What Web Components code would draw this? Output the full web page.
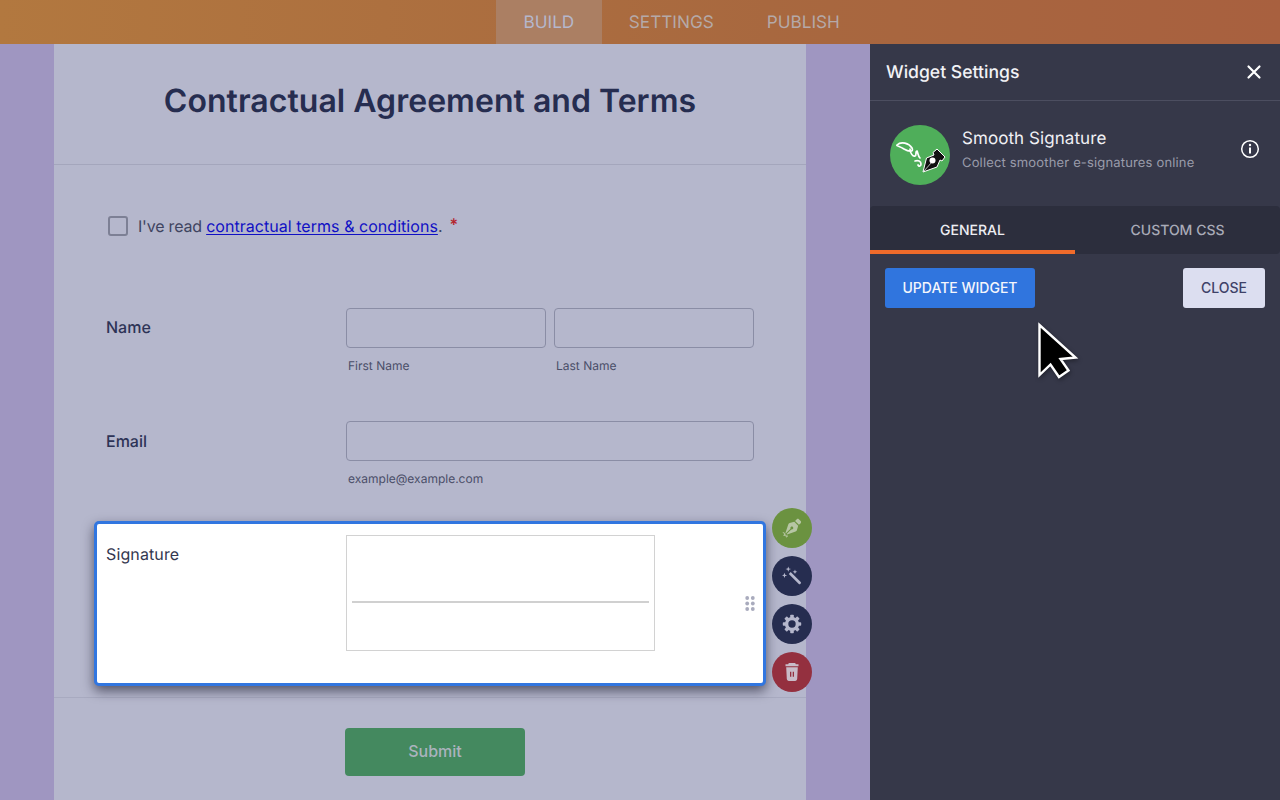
<!DOCTYPE html>
<html lang="en"><head><meta charset="utf-8"><title>Form builder</title>
<style>
html,body{margin:0;padding:0;height:100%;overflow:hidden;background:#9f96c1}
body{font-family:"Inter","Liberation Sans",sans-serif;text-rendering:geometricPrecision}
</style></head>
<body>
<app-shell>
  <top-bar slot="top"></top-bar>
  <form-canvas slot="main">
    <form-card>
      <h-title slot="header">Contractual Agreement and Terms</h-title>
      <terms-row></terms-row>
      <field-row label="Name" style="--top:72px;--h:113px;--lt:9px"><name-inputs></name-inputs></field-row>
      <field-row label="Email" style="--top:0;--h:88px;--lt:9.5px"><email-input></email-input></field-row>
      <selected-field label="Signature"></selected-field>
      <submit-row></submit-row>
    </form-card>
  </form-canvas>
  <settings-panel slot="side"></settings-panel>
</app-shell>
<mouse-cursor></mouse-cursor>
<script>
const def=(name,html)=>customElements.define(name,class extends HTMLElement{
  connectedCallback(){ if(this.shadowRoot) return; const r=this.attachShadow({mode:'open'}); r.innerHTML=typeof html==='function'?html(this):html; }
});
def('app-shell',`<style>
:host{display:grid;grid-template-columns:870px 410px;grid-template-rows:44px 756px;width:1280px;height:800px;overflow:hidden}
.t{grid-column:1/3}
</style><div class="t"><slot name="top"></slot></div><slot name="main"></slot><slot name="side"></slot>`);
def('top-bar',`<style>
:host{display:flex;padding-left:496px;height:44px;background:linear-gradient(90deg,#b2783f 0%,#a8683f 60%,#a8603f 100%);font:400 17.200px/45px Inter,sans-serif;color:#b5a9a8}
a{display:block;padding:0 26.500px;color:inherit;text-decoration:none}
a.on{background:#ab7f63;color:#b5b7cc;padding:0 28px 0 27.500px}
nav{display:flex}
</style><nav><a class="on">BUILD</a><a>SETTINGS</a><a>PUBLISH</a></nav>`);
def('form-canvas',`<style>:host{display:block;height:756px;background:#9f96c1;padding-left:54px;overflow:hidden}</style><slot></slot>`);
def('form-card',`<style>
:host{display:block;width:752px;height:756px;background:#b5b7cc;position:relative}
header{box-sizing:border-box;height:121px;padding-bottom:7px;border-bottom:1px solid #a4a6bc;display:flex;align-items:center;justify-content:center}
</style><header><slot name="header"></slot></header><slot></slot>`);
def('h-title',`<style>:host{display:block;font:600 32px/40px Inter,sans-serif;color:#262d50;letter-spacing:.03px}</style><slot></slot>`);
def('terms-row',`<style>
:host{display:flex;align-items:center;margin:51px 0 0 54px;height:20px;font:400 16px/20px Inter,sans-serif;color:#3f4460}
.c{border:2px solid #7d8095;border-radius:3px;margin-right:10px;flex:none;box-sizing:content-box;width:16px;height:16px}
.p{letter-spacing:-.2px}
a{color:#1010c4;text-decoration:underline;text-underline-offset:2px;letter-spacing:.04px}
.s{color:#b4252c;margin-left:7px;position:relative;top:-2px;font-weight:600}
</style><span class="c"></span><span><span class="p">I've read </span><a>contractual terms &amp; conditions</a>.<span class="s">*</span></span>`);
def('field-row',h=>`<style>
:host{display:flex;margin-top:var(--top);height:var(--h);padding:0 52px;width:648px}
label{width:240px;flex:none;font:450 16px/20px Inter,sans-serif;color:#2d3356;padding-top:var(--lt)}
.b{flex:1;min-width:0}
</style><label>${h.getAttribute('label')}</label><div class="b"><slot></slot></div>`);
const boxStyle=`.i{box-sizing:border-box;height:40px;border:1px solid #8a8da5;border-radius:4px}.h{font:400 12px/16px Inter,sans-serif;color:#4a4e68;margin:10px 0 0 2px}`;
def('name-inputs',`<style>:host{display:grid;grid-template-columns:200px 200px;gap:8px}${boxStyle}</style>
<div><div class="i"></div><div class="h">First Name</div></div><div><div class="i"></div><div class="h">Last Name</div></div>`);
def('email-input',`<style>:host{display:block}${boxStyle}</style><div class="i"></div><div class="h">example@example.com</div>`);
const gearTeeth=[0,45,90,135,180,225,270,315].map(a=>`<rect x="8.200" y=".8" width="3.600" height="4" rx=".8" transform="rotate(${a} 10 10)"/>`).join('');
def('selected-field',h=>`<style>
:host{display:flex;position:relative;box-sizing:border-box;width:672px;height:165px;margin:12px 0 0 40px;background:#fff;border:3px solid #3176e0;border-radius:5px;box-shadow:0 5px 12px rgba(20,20,40,.6);padding:11px 9px;z-index:1}
label{width:240px;flex:none;font:400 16px/20px Inter,sans-serif;color:#33374f;padding-top:9px;letter-spacing:.12px}
.sig{box-sizing:border-box;width:309px;height:116px;border:1px solid #d2d2d2;display:flex;align-items:center;padding:0 5px}
.sig i{display:block;width:100%;height:2px;background:#d0d0d0;margin-top:17px}
.dots{position:absolute;right:8px;top:72px;width:10px;height:15px;color:#a9abbd}
.acts{position:absolute;left:675px;top:-16px;display:flex;flex-direction:column;gap:8px}
.a{width:40px;height:40px;border-radius:50%;display:flex;align-items:center;justify-content:center;background:#262d50}
.a svg{display:block}
.g{background:#6b9240}.r{background:#94303f}
</style>
<label>Signature</label><div class="sig"><i></i></div>
<svg class="dots" viewBox="0 0 10 15" fill="currentColor"><circle cx="2.200" cy="2" r="1.900"/><circle cx="7.800" cy="2" r="1.900"/><circle cx="2.200" cy="7.500" r="1.900"/><circle cx="7.800" cy="7.500" r="1.900"/><circle cx="2.200" cy="13" r="1.900"/><circle cx="7.800" cy="13" r="1.900"/></svg>
<div class="acts">
<div class="a g"><svg width="20" height="20" viewBox="0 0 20 20" fill="#b7c6a4"><g transform="translate(3.500 .8) scale(.0305)"><path d="M136.600 138.790a64.003 64.003 0 0 0-43.310 41.350L0 460l14.690 14.690L164.800 324.580c-2.990-6.260-4.800-13.180-4.800-20.580 0-26.510 21.490-48 48-48s48 21.490 48 48-21.490 48-48 48c-7.400 0-14.320-1.810-20.580-4.800L37.310 497.310 52 512l279.860-93.290a64.003 64.003 0 0 0 41.350-43.310L416 224 288 96l-151.400 42.790zm361.340-64.620l-60.110-60.110c-18.750-18.750-49.160-18.750-67.910 0l-56.550 56.550 128.020 128.020 56.550-56.550c18.750-18.750 18.750-49.150 0-67.910z"/></g><path d="M.8 14.500l2.200 1-1.200 2 2.200-.6.300 2.200 1.700-1.400" fill="none" stroke="#b7c6a4" stroke-width="1"/></svg></div>
<div class="a"><svg width="20" height="20" viewBox="0 0 20 20" fill="#b5b7cc"><path d="M6.800 7.900l1.900-1.900 10 10.100a1.100 1.100 0 0 1 0 1.500l-.4.400a1.100 1.100 0 0 1-1.500 0z"/><path d="M6.300 .4l.7 2 2 .7-2 .7-.7 2-.8-2-2-.7 2-.7zM13 3.500l.6 1.700 1.700.6-1.700.6-.6 1.700-.7-1.700-1.700-.6 1.700-.6zM2.500 6.700l.7 2 2 .7-2 .7-.7 2-.8-2-1.700-.7 1.700-.7z"/></svg></div>
<div class="a"><svg width="20" height="20" viewBox="0 0 20 20"><g fill="#b5b7cc">${gearTeeth}</g><circle cx="10" cy="10" r="5.400" fill="none" stroke="#b5b7cc" stroke-width="3.400"/></svg></div>
<div class="a r"><svg width="20" height="20" viewBox="0 0 20 20"><path fill="#c9bcc8" fill-rule="evenodd" d="M6.800 1h6.400l.6 1.300h2.700v1.900H3.500V2.300h2.700zM4.200 5.200h11.600l-.6 11.900a1.900 1.900 0 0 1-1.900 1.800H6.700a1.900 1.900 0 0 1-1.900-1.800zM8 9.800v4.900h1.300V9.800zm2.700 0v4.900H12V9.800z"/></svg></div>
</div>`);
def('submit-row',`<style>
:host{display:flex;justify-content:center;margin-top:11px;border-top:1px solid #a8aac0;padding:30px 0 0 10px}
button{width:180px;height:48px;background:#44895f;border:0;border-radius:4px;color:#abb3bd;font:500 16px/46px Inter,sans-serif;padding:0 0 2px}
</style><button>Submit</button>`);
def('settings-panel',`<style>
:host{display:block;background:#363849;height:756px;color:#fff;font-family:Inter,"Noto Sans",sans-serif;overflow:hidden}
.top{display:flex;align-items:center;justify-content:space-between;height:56px;padding:0 17px 0 16px;border-bottom:1px solid #4c4e60}
.top b{font-weight:500;font-size:17.600px;color:#f2f2f6;position:relative;top:.5px}
.info{display:flex;align-items:center;height:105px;padding:0 20px 0 20px}
.logo{width:60px;height:60px;flex:none;margin-right:12px;display:block;margin-top:2px}
.t{flex:1}
.t div{font-size:17px;line-height:22px;color:#f0f0f4;margin-top:-6px;letter-spacing:.07px}
.t p{margin:4px 0 0;font-size:13px;line-height:19px;color:#9a9cab;letter-spacing:.16px}
.tabs{display:grid;grid-template-columns:205px 205px;height:48px;background:#2c2e3d;border-radius:4px;font-size:14px;font-weight:500;text-align:center;line-height:49px}
.tabs div{box-sizing:border-box;height:48px;color:#a9abb8}
.tabs .on{color:#eeeef3;border-bottom:4px solid #f06b2b}
.btns{display:flex;justify-content:space-between;padding:14px 15px}
button{height:40px;border:0;border-radius:3px;font:500 14px/40px Inter,"Noto Sans",sans-serif;padding:0}
.u{width:150px;background:#3075de;color:#f4f6fc}.c{width:82px;background:#dcdef0;color:#3e4168}
</style>
<div class="top"><b>Widget Settings</b><svg width="18" height="18" viewBox="0 0 18 18" stroke="#fff" stroke-width="2.200" stroke-linecap="round"><path d="M3.500 3.500l11 11M14.500 3.500l-11 11"/></svg></div>
<div class="info">
<svg class="logo" viewBox="0 0 60 60"><circle cx="30" cy="30" r="30" fill="#4fae5a"/>
<path d="M7 20c4-4 12-2 15 3 2 4-3 4-8 1-4-3-8-3-7-4M20 24c0 4 3 8 5 7 2-1 0-5 2-5 1 2 1 5 3 7M25 36c3-1 6 0 6 3 0 2-2 3-3 1" fill="none" stroke="#fff" stroke-width="1.700" stroke-linecap="round"/>
<path d="M33 47L36.500 33 44 30 43 27.500 47 24 55 32 52 36 50 35 47 42Z" fill="#111" stroke="#fff" stroke-width="1"/>
<path d="M34 46l8-9" stroke="#fff" stroke-width=".7"/>
<circle cx="42.500" cy="35.500" r="3" fill="#fff"/></svg>
<div class="t"><div>Smooth Signature</div><p>Collect smoother e-signatures online</p></div>
<svg width="20" height="20" viewBox="0 0 20 20" style="margin-top:-9px"><circle cx="10" cy="10" r="8.300" fill="none" stroke="#fff" stroke-width="1.500"/><rect x="9" y="8.500" width="2" height="6" fill="#fff"/><circle cx="10" cy="6" r="1.200" fill="#fff"/></svg>
</div>
<div class="tabs"><div class="on">GENERAL</div><div>CUSTOM CSS</div></div>
<div class="btns"><button class="u">UPDATE WIDGET</button><button class="c">CLOSE</button></div>`);
def('mouse-cursor',`<style>:host{position:absolute;left:1034px;top:320px;width:46px;height:62px;display:block;z-index:5}
svg{filter:drop-shadow(1px 2px 2px rgba(0,0,0,.35))}</style>
<svg width="46" height="62" viewBox="0 0 46 62"><path d="M5.500 5v50l11-10.500 8.500 12.500 9.500-6.500-8-11.500 15-1.500z" fill="#000" stroke="#fff" stroke-width="2.400" stroke-linejoin="miter"/></svg>`);
</script>
</body></html>
